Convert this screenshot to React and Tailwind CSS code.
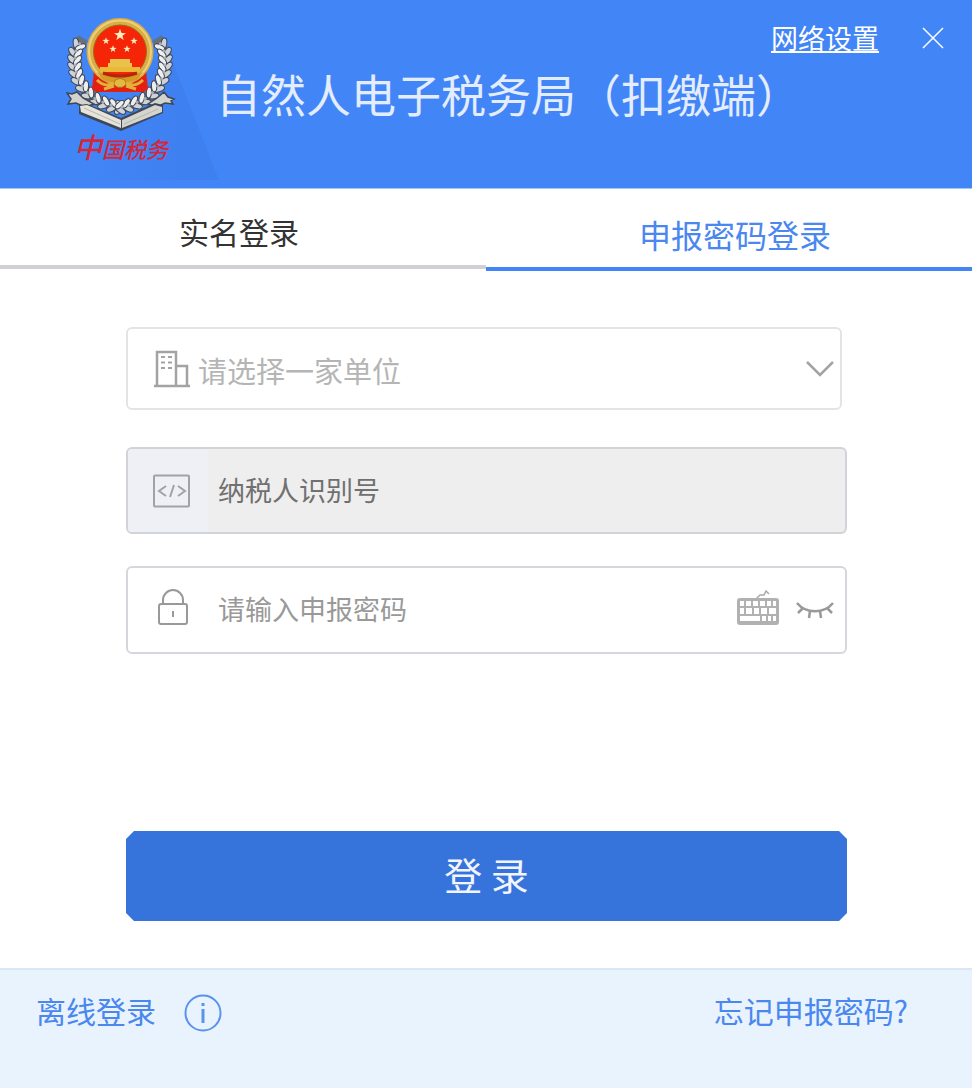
import React, { useState } from 'react';

const LEAVES = [
  [14, 27, 30], [10, 34, 5], [9, 41, 0], [9, 48, -5], [10, 55, -12], [12, 62, -22],
  [16, 69, -34], [21, 76, -44], [28, 82, -54], [36, 86, -66], [44, 89, -76], [51, 91, -86],
];

function Wreath() {
  return (
    <g>
      <path d="M17 22C5 40 9 62 21 76c8 9 20 13 31 14" fill="none" stroke="#66707f" strokeWidth="11" />
      {LEAVES.map(([x, y, r]) => (
        <g key={y} transform={`translate(${x} ${y}) rotate(${r})`}>
          <ellipse cx="-4" cy="0" rx="2.8" ry="5.5" transform="rotate(-38)" fill="#cfd2d6" stroke="#3d4655" strokeWidth="1" />
          <ellipse cx="4" cy="1" rx="2.6" ry="5.5" transform="rotate(38)" fill="#eeefee" stroke="#3d4655" strokeWidth="1" />
          <circle cx="0" cy="1" r="1.6" fill="#a9aeb6" />
        </g>
      ))}
    </g>
  );
}

function Star({ x, y, size }) {
  return (
    <path
      d="M0-5 1.2-1.6 4.8-1.5 1.9.6 2.9 4 0 2-2.9 4-1.9.6-4.8-1.5-1.2-1.6Z"
      transform={`translate(${x} ${y}) scale(${size})`}
      fill="#ffedc0"
    />
  );
}

function Emblem() {
  return (
    <svg viewBox="0 0 110 116" className="h-[116px] w-[110px]" aria-hidden="true">
      <Wreath />
      <g transform="translate(108 0) scale(-1 1)">
        <Wreath />
      </g>
      {/* ribbon ends and open book */}
      <path d="M1 77l5 1 5-2 6 6 11 6-9 3-9-4-8 1 3-5z" fill="#d2d2cf" stroke="#3f4654" strokeWidth="1.5" />
      <path d="M108 83l-6-2-4-5-7 6-9 6 9 3 8-4 8 1-2-3z" fill="#d2d2cf" stroke="#3f4654" strokeWidth="1.500" />
      <path d="M13 89l8-1 34 14 34-15 8 2v8l-42 18-42-17z" fill="#3f4654" />
      <path d="M14 90l7-1 34 15v8L15 96z" fill="#e6e3da" />
      <path d="M56 104l33-15 7 2v5l-40 16z" fill="#d5d5d0" />
      <path d="M18 92l36 16M58 108l34-15" fill="none" stroke="#b9b6ad" strokeWidth="1" />
      {/* national emblem */}
      <path d="M28 55h52l2 18-4 3H30l-4-3z" fill="#e3200f" />
      <circle cx="54" cy="35.500" r="30" fill="#f52507" stroke="#d9ad43" strokeWidth="7" />
      <circle cx="54" cy="35.500" r="31" fill="none" stroke="#ecd07a" strokeWidth="2" />
      <circle cx="54" cy="35.500" r="26.500" fill="none" stroke="#9f6a1c" strokeWidth="1" />
      <Star x={54} y={19} size={1.25} />
      <Star x={40} y={25} size={0.75} />
      <Star x={47} y={33} size={0.75} />
      <Star x={61} y={33} size={0.75} />
      <Star x={68} y={25} size={0.75} />
      <path d="M44 43h20v4h2v5H42v-5h2z" fill="#e9c24d" />
      <path d="M34 51h40v5H34z" fill="#edb838" />
      <path d="M31 56c14 6 32 6 46 0l-6 8c-10 4-24 4-34 0z" fill="#d99a24" />
      <path d="M37 57c10 4 24 4 34 0" fill="none" stroke="#b5260a" strokeWidth="3" />
      <ellipse cx="54" cy="67" rx="6" ry="4.500" fill="#e3b93f" stroke="#a87318" strokeWidth="1" />
      <path d="M31 64c6 6 11 6 17 3M77 64c-6 6-11 6-17 3M38 73l10-3M70 73l-10-3" fill="none" stroke="#e3b03a" strokeWidth="3" />
    </svg>
  );
}

function BuildingIcon() {
  return (
    <svg viewBox="0 0 36 38" className="h-[38px] w-9 shrink-0" fill="none" stroke="#a3a3a3" strokeWidth="2.5" aria-hidden="true">
      <path d="M3 36V2h19v34M22 16h11v20M0 36h36" />
      <path d="M7 7h4M14 7h4M7 12.500h4M14 12.500h4M7 18h4M14 18h4" strokeWidth="2" />
    </svg>
  );
}

function CodeIcon() {
  return (
    <svg viewBox="0 0 38 34" className="h-[34px] w-[38px]" fill="none" stroke="#a1a2a5" strokeWidth="2" aria-hidden="true">
      <rect x="1" y="1.500" width="35" height="31" rx="1" />
      <path d="M13 12l-7 5 7 5M25 12l7 5-7 5M21 11l-4 12" />
    </svg>
  );
}

function LockIcon() {
  return (
    <svg viewBox="0 0 32 38" className="h-[38px] w-8" fill="none" stroke="#999" strokeWidth="2" aria-hidden="true">
      <rect x="2" y="15" width="28" height="20" rx="2" />
      <path d="M6 15v-4a10 10 0 0 1 20 0v4M16 22v6" />
    </svg>
  );
}

function KeyboardIcon() {
  return (
    <svg viewBox="0 0 44 36" className="h-9 w-11" aria-hidden="true">
      <path d="M20 9l4-4h4l2-4 3 3" fill="none" stroke="#aaa" strokeWidth="1.500" />
      <rect x="1" y="8" width="42" height="27" rx="3" fill="#b1b1b1" />
      <g fill="#fff">
        <path d="M4 11h4v5H4zM10 11h5v5h-5zM17 11h5v5h-5zM24 11h5v5h-5zM31 11h4v5h-4zM37 11h3v5h-3z" />
        <path d="M4 18h4v6H4zM10 18h6v6h-6zM18 18h5v6h-5zM25 18h6v6h-6zM33 18h7v6h-7z" />
        <path d="M4 26h20v5H4zM26 26h4v5h-4zM32 26h3v5h-3zM37 26h3v5h-3z" />
      </g>
    </svg>
  );
}

function ClosedEyeIcon() {
  return (
    <svg viewBox="0 0 38 20" className="h-5 w-[38px]" fill="none" stroke="#999" strokeWidth="2.5" aria-hidden="true">
      <path d="M1 3c9 11 27 11 36 0M7 8l-5 5M31 8l5 5M14 11l-1 7M24 11l1 7" />
    </svg>
  );
}

function App() {
  const [company, setCompany] = useState('');
  const [password, setPassword] = useState('');
  const [showPassword, setShowPassword] = useState(false);

  return (
    <div className="flex min-h-screen flex-col bg-white font-['Noto_Sans_CJK_SC',sans-serif]">
      <header className="relative flex h-[189px] items-start border-b border-[#a5c8f2] bg-[#4285f6] pl-[66px] text-white">
        <svg viewBox="0 0 130 130" className="absolute top-[50px] left-[90px] size-[130px]" aria-hidden="true">
          <defs>
            <linearGradient id="facet">
              <stop offset="0" stopColor="#4285f6" />
              <stop offset="0.7" stopColor="#3f80f0" />
            </linearGradient>
          </defs>
          <path d="M0 130 0 60 78 0 129 130z" fill="url(#facet)" />
        </svg>
        <div className="relative flex w-[110px] shrink-0 flex-col items-center pt-4">
          <Emblem />
          <span className="text-[22px] leading-7 font-medium whitespace-nowrap text-[#d5263a] italic">
            <span className="text-[28px]">中</span>国税务
          </span>
        </div>
        <h1 className="pt-[62px] pl-[40px] text-[45px] leading-[64px] whitespace-nowrap text-[#e3edff]">
          自然人电子税务局（扣缴端）
        </h1>
        <div className="absolute top-[18px] right-[27px] flex items-center gap-[42px]">
          <a href="#network" className="text-[27px] leading-10 underline decoration-2 underline-offset-2">网络设置</a>
          <button type="button" aria-label="关闭">
            <svg viewBox="0 0 24 24" className="size-6" fill="none" stroke="#fff" strokeWidth="1.500">
              <path d="M2 2l20 20M22 2 2 22" />
            </svg>
          </button>
        </div>
      </header>

      <nav className="grid grid-cols-2 items-start">
        <button type="button" className="h-20 border-b-4 border-[#d0d1d8] pt-2 pr-2 text-[30px] leading-10 text-[#333]">
          实名登录
        </button>
        <button type="button" className="h-[82px] border-b-4 border-[#4285f6] pt-3 pl-3 text-[32px] leading-10 text-[#4a87ee]">
          申报密码登录
        </button>
      </nav>

      <form
        onSubmit={(e) => e.preventDefault()}
        className="flex flex-1 flex-col pt-14 pr-[125px] pb-[47px] pl-[126px]"
      >
        <label className="relative mr-[5px] flex h-[83px] items-center rounded-md border-2 border-[#e4e4e6] pl-[26px]">
          <BuildingIcon />
          <select
            aria-label="单位"
            value={company}
            onChange={(e) => setCompany(e.target.value)}
            className="h-full flex-1 appearance-none pt-1 pl-2 text-[29px] text-[#b5b5b5] outline-none"
          >
            <option value="">请选择一家单位</option>
          </select>
          <svg viewBox="0 0 28 16" className="pointer-events-none absolute right-[6px] h-4 w-7" fill="none" stroke="#a3a3a3" strokeWidth="2.500" aria-hidden="true">
            <path d="M1 1l13 13L27 1" />
          </svg>
        </label>

        <label className="mt-[37px] flex h-[87px] items-stretch overflow-hidden rounded-md border-2 border-[#d2d3d8] bg-[#eee]">
          <span className="flex w-20 items-center bg-[#eef0f5] pl-[25px]">
            <CodeIcon />
          </span>
          <input
            type="text"
            disabled
            aria-label="纳税人识别号"
            placeholder="纳税人识别号"
            className="min-w-0 flex-1 pl-[10px] text-[27px] placeholder:text-[#707070]"
          />
        </label>

        <div className="mt-8 flex h-[88px] items-center rounded-md border-2 border-[#d6d7dc] pr-[11px] pb-1">
          <label htmlFor="password" className="w-20 pl-[29px]">
            <LockIcon />
          </label>
          <input
            id="password"
            type={showPassword ? 'text' : 'password'}
            value={password}
            onChange={(e) => setPassword(e.target.value)}
            placeholder="请输入申报密码"
            className="h-full min-w-0 flex-1 pl-[10px] text-[27px] outline-none placeholder:text-[#999]"
          />
          <button type="button" aria-label="软键盘">
            <KeyboardIcon />
          </button>
          <button type="button" aria-label="显示密码" className="mt-1 ml-4" onClick={() => setShowPassword(!showPassword)}>
            <ClosedEyeIcon />
          </button>
        </div>

        <button
          type="submit"
          className="mt-auto h-[90px] bg-[#3674dc] pb-1 text-[38px] leading-none text-[#f0f5ff] [clip-path:polygon(8px_0,calc(100%-8px)_0,100%_8px,100%_calc(100%-8px),calc(100%-8px)_100%,8px_100%,0_calc(100%-8px),0_8px)]"
        >
          登 录
        </button>
      </form>

      <footer className="flex h-[120px] items-start justify-between border-t-2 border-[#d8e7f7] bg-[#e8f3fe] pt-5 pr-[64px] pl-9 text-[#4a87ee]">
        <div className="flex items-start gap-7">
          <a href="#offline" className="text-[30px] leading-10">离线登录</a>
          <button type="button" aria-label="说明" className="pt-1">
            <svg viewBox="0 0 38 38" className="size-[38px]" fill="none" stroke="#5b92ee" strokeWidth="2">
              <circle cx="19" cy="19" r="17.500" />
              <path d="M19 15v14M19 9v3" strokeWidth="3" />
            </svg>
          </button>
        </div>
        <a href="#forgot" className="text-[30px] leading-10">忘记申报密码?</a>
      </footer>
    </div>
  );
}

export default App;
